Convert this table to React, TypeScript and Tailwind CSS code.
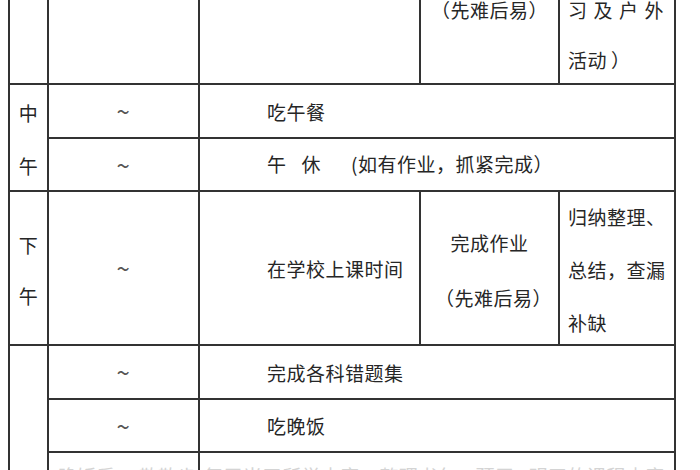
import React from 'react';

// timetable fragment: cells sit on a fixed grid so the ruling lines land where the scan has them
const line = 'border-r-2 border-b-2 border-[#333]';

function Cell({ className = '', children }: { className?: string; children?: React.ReactNode }) {
  return <div className={`${line} ${className}`}>{children}</div>;
}

const Tilde = () => (
  <Cell className="flex items-center justify-center text-[#555] text-[24px] leading-none">~</Cell>
);

export default function App() {
  return (
    <div className="w-[700px] h-[470px] overflow-hidden bg-white text-[#262626] text-[19px] tracking-[0.5px] font-['Noto_Sans_CJK_SC','Noto_Sans',sans-serif]">
      <div className="ml-[8px] w-[668px] border-l-2 border-[#333] grid grid-cols-[39px_151px_221px_139px_116px] grid-rows-[85px_54px_53px_154px_54px_53px_60px]">
        {/* top row, mostly scrolled out of view */}
        <Cell />
        <Cell />
        <Cell />
        <Cell className="flex flex-col items-center">
          <div className="-mt-[16px] leading-[52px]">（先难后易）</div>
        </Cell>
        <Cell className="flex flex-col pl-[8px]">
          <div className="-mt-[15px] leading-[50px]">
            <div className="tracking-[6.5px]">习及户外</div>
            <div>
              活动<span className="ml-[4px]">）</span>
            </div>
          </div>
        </Cell>

        {/* 中午 */}
        <Cell className="row-span-2 flex flex-col items-center justify-center leading-[53px] pt-[3px]">
          <div>中</div>
          <div>午</div>
        </Cell>
        <Tilde />
        <Cell className="col-span-3 flex items-center pl-[67px] pt-[3px]">吃午餐</Cell>
        <Tilde />
        <Cell className="col-span-3 flex items-center pl-[67px]">
          <span>午</span>
          <span className="ml-[15px]">休</span>
          <span className="ml-[30px]">(如有作业，抓紧完成）</span>
        </Cell>

        {/* 下午 */}
        <Cell className="flex flex-col items-center justify-center leading-[51px] pt-[4px]">
          <div>下</div>
          <div>午</div>
        </Cell>
        <Tilde />
        <Cell className="flex items-center pl-[67px] pt-[2px]">在学校上课时间</Cell>
        <Cell className="flex flex-col items-center justify-center leading-[55px] pt-[3px]">
          <div>完成作业</div>
          <div className="pl-[8px]">（先难后易）</div>
        </Cell>
        <Cell className="flex flex-col justify-center pl-[8px] leading-[53px] pt-[3px]">
          <div>归纳整理、</div>
          <div>总结，查漏</div>
          <div>补缺</div>
        </Cell>

        {/* 晚上 */}
        <Cell className="row-span-3" />
        <Tilde />
        <Cell className="col-span-3 flex items-center pl-[67px] pt-[2px]">完成各科错题集</Cell>
        <Tilde />
        <Cell className="col-span-3 flex items-center pl-[67px] pt-[2px]">吃晚饭</Cell>
        <Cell className="overflow-hidden pt-[13px] pl-[9px] leading-[19px] text-[#d4d4d4] whitespace-nowrap tracking-normal">
          晚饭后<span className="ml-[24px]">散散步</span>
        </Cell>
        <Cell className="col-span-3 overflow-hidden pt-[13px] pl-[4px] leading-[19px] text-[#d4d4d4] whitespace-nowrap">
          复习当天所学内容，整理书包<span className="ml-[18px]">预习</span>
          <span className="ml-[14px]">明天的课程内容</span>
        </Cell>
      </div>
    </div>
  );
}
